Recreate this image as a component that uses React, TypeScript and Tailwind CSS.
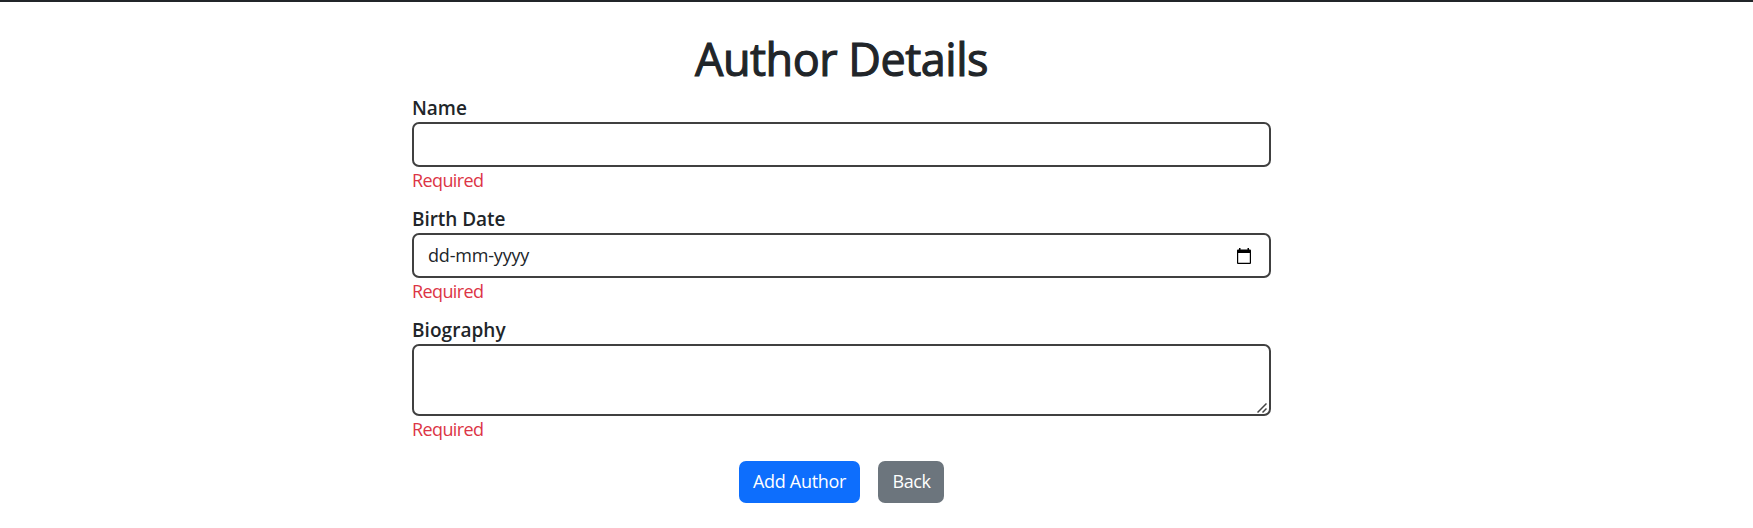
import React from "react";

const fieldClass =
  "block w-full rounded-[7px] border-2 border-[#404040] bg-white px-[14px] text-[18px] text-[#212529] outline-none";

function Label({ htmlFor, className, children }: { htmlFor: string; className: string; children: React.ReactNode }) {
  return (
    <label htmlFor={htmlFor} className={`block h-[27px] w-max whitespace-nowrap text-[19px] leading-[27px] font-semibold ${className}`}>
      {children}
    </label>
  );
}

function Required() {
  return (
    <p className="h-[27px] w-max text-[18px] leading-[27px] tracking-[-0.6px] text-[#dc3545]">Required</p>
  );
}

function CalendarIcon() {
  return (
    <svg className="h-4 w-[14px]" viewBox="0 0 14 16" fill="#000" aria-hidden="true">
      <path d="M2 0h1.5v1.5h7V0H12v1.5h1a1 1 0 0 1 1 1V15a1 1 0 0 1-1 1H1a1 1 0 0 1-1-1V2.500a1 1 0 0 1 1-1h1zM1.200 5v9.800h11.600V5z" fillRule="evenodd" />
    </svg>
  );
}

export default function App() {
  return (
    <div className="h-[528px] overflow-hidden border-t-2 border-[#212529] bg-white pr-[70px] font-['Open_Sans','Noto_Sans',sans-serif] text-[#212529]">
      <main className="mx-auto w-[859px] pt-[30px]">
        <h1 className="flex h-[54px] justify-center text-[45px] leading-[54px] font-medium whitespace-nowrap tracking-[-0.5px] [-webkit-text-stroke:1.1px_#212529]">
          Author Details
        </h1>
        <form className="pt-[9px]" onSubmit={(e) => e.preventDefault()}>
          <div className="h-[111px]">
            <Label htmlFor="name" className="tracking-[-0.05px]">Name</Label>
            <input id="name" className={`${fieldClass} h-[45px]`} />
            <Required />
          </div>
          <div className="h-[111px]">
            <Label htmlFor="birth" className="tracking-[-0.05px]">Birth Date</Label>
            <div className={`${fieldClass} flex! h-[45px] items-center justify-between pr-[18px]!`}>
              <input
                id="birth"
                placeholder="dd-mm-yyyy"
                className="w-[200px] tracking-[-0.18px] outline-none placeholder:text-[#212529]"
              />
              <CalendarIcon />
            </div>
            <Required />
          </div>
          <div className="h-[139px]">
            <Label htmlFor="bio" className="tracking-[0.05px]">Biography</Label>
            <div className="relative">
              <textarea id="bio" className={`${fieldClass} h-[72px] resize-none`} />
              <svg className="absolute right-[4px] bottom-[3px] h-[10px] w-[10px]" viewBox="0 0 10 10" stroke="#444" strokeWidth="1.5" aria-hidden="true">
                <path d="M0.500 9.500 9.500 0.500M5.500 9.500 9.500 5.500" />
              </svg>
            </div>
            <Required />
          </div>
          <div className="flex justify-center gap-[18px] pt-[5px]">
            <button className="h-[42px] w-[121px] rounded-[7px] bg-[#0d6efd] pb-[2px] text-[18px] whitespace-nowrap tracking-[-0.3px] text-white">
              Add Author
            </button>
            <button className="h-[42px] w-[66px] rounded-[7px] bg-[#6c757d] pb-[2px] pl-px text-[18px] tracking-[-0.4px] text-white">
              Back
            </button>
          </div>
        </form>
      </main>
    </div>
  );
}
